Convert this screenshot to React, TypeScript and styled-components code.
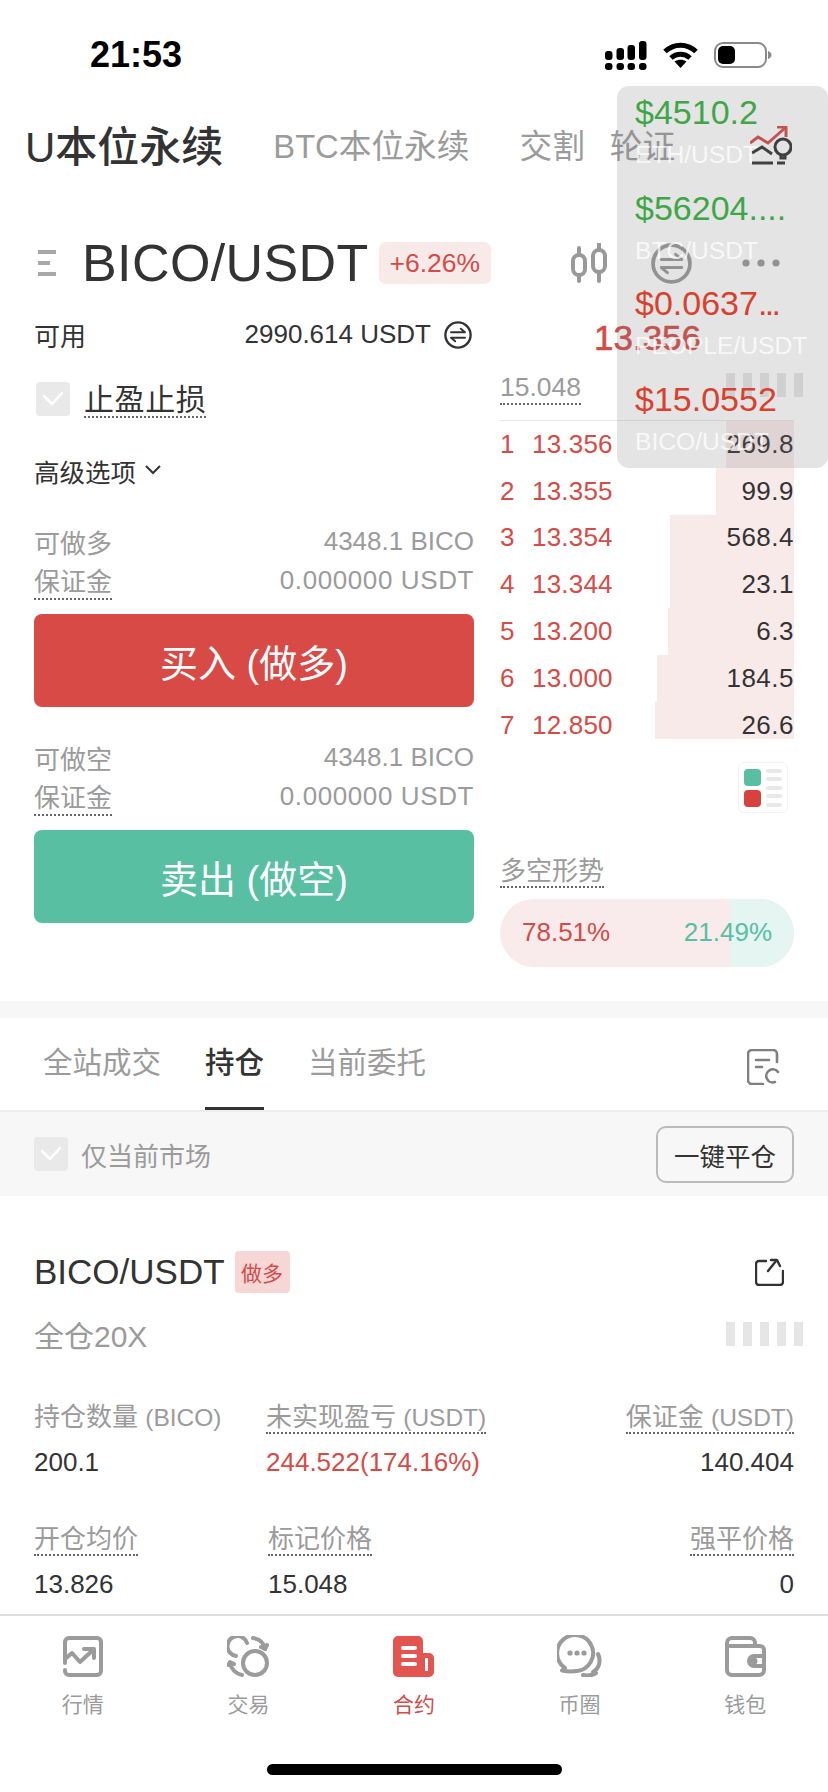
import React from "react";
import styled, { createGlobalStyle } from "styled-components";

const red = "#d44c48";
const green = "#58bfa3";
const dark = "#333333";
const gray = "#9b9b9b";

const Global = createGlobalStyle`
  html, body { margin: 0; padding: 0; background: #fff; }
  body { font-family: "Liberation Sans", "Noto Sans CJK SC", sans-serif; color: ${dark}; }
  * { box-sizing: border-box; }
`;

const Page = styled.div`
  position: relative;
  width: 828px;
  height: 1792px;
  overflow: hidden;
  display: flex;
  flex-direction: column;
  background: #fff;
`;

const StatusBar = styled.div`
  height: 86px;
  padding: 24px 56px 0 90px;
  display: flex;
  align-items: center;
  justify-content: space-between;
  flex-shrink: 0;
`;

const Clock = styled.span`
  font-size: 36px;
  font-weight: 700;
  color: #000;
`;

const StatusIcons = styled.div`
  display: flex;
  align-items: center;
  gap: 16px;
`;

const TopTabs = styled.div`
  height: 114px;
  padding: 0 36px 0 25px;
  display: flex;
  align-items: center;
  flex-shrink: 0;
`;

const TopTab = styled.span<{ $active?: boolean; $gap?: number }>`
  font-size: ${(p) => (p.$active ? 42 : 32.7)}px;
  font-weight: ${(p) => (p.$active ? 500 : 400)};
  color: ${(p) => (p.$active ? dark : gray)};
  margin-right: ${(p) => p.$gap ?? 0}px;
  white-space: nowrap;
`;

const TopIcon = styled.svg`
  margin: 6px 0 0 auto;
`;

const PairRow = styled.div`
  height: 106px;
  margin-top: 10px;
  padding: 0 48px 0 38px;
  display: flex;
  align-items: center;
  flex-shrink: 0;
`;

const PairName = styled.span`
  font-size: 52px;
  margin-left: 26px;
  letter-spacing: 0.4px;
`;

const ChangeBadge = styled.span`
  margin-left: 10px;
  width: 112px;
  height: 42px;
  border-radius: 7px;
  background: #f9eaea;
  color: ${red};
  font-size: 26.5px;
  display: flex;
  align-items: center;
  justify-content: center;
`;

const PairTools = styled.div`
  margin-left: auto;
  display: flex;
  align-items: center;
  gap: 44px;
`;

const MoreIcon = styled.svg`
  margin-left: 6px;
`;

const TradeGrid = styled.div`
  height: 685px;
  padding: 0 34px;
  display: grid;
  grid-template-columns: 440px 294px;
  column-gap: 26px;
  flex-shrink: 0;
`;

const Column = styled.div`
  display: flex;
  flex-direction: column;
`;

const AvailRow = styled.div`
  height: 37px;
  display: flex;
  align-items: center;
  justify-content: space-between;
  font-size: 26px;
`;

const AvailValue = styled.span`
  display: flex;
  align-items: center;
  gap: 13px;
  margin-right: 2px;
`;

const CheckRow = styled.div`
  margin-top: 29px;
  padding-left: 2px;
  height: 34px;
  display: flex;
  align-items: center;
  gap: 14px;
`;

const CheckBox = styled.span`
  width: 34px;
  height: 34px;
  border-radius: 4px;
  background: #e9e9e9;
  display: flex;
  align-items: center;
  justify-content: center;
  flex-shrink: 0;
`;

const Dotted = styled.span`
  display: inline-block;
  border-bottom: 2px dotted #666;
`;

const StopLoss = styled(Dotted)`
  font-size: 30px;
  letter-spacing: 0.6px;
  line-height: 36px;
  height: 36px;
  margin-top: 2px;
`;

const AdvancedRow = styled.div`
  margin-top: 34px;
  height: 40px;
  display: flex;
  align-items: center;
  gap: 8px;
  font-size: 25.5px;
`;

const InfoRow = styled.div<{ $top?: number }>`
  height: 39px;
  margin-top: ${(p) => p.$top ?? 0}px;
  display: flex;
  align-items: center;
  justify-content: space-between;
  font-size: 26px;
  color: ${gray};
`;

const ZeroMargin = styled.span`
  letter-spacing: 0.6px;
`;

const TradeButton = styled.div<{ $side: "buy" | "sell" }>`
  height: 93px;
  margin-top: 14px;
  border-radius: 8px;
  background: ${(p) => (p.$side === "buy" ? "#d74a45" : green)};
  color: #fff;
  font-size: 38px;
  display: flex;
  align-items: center;
  justify-content: center;
`;

const LastPrice = styled.div`
  height: 44px;
  padding-left: 94px;
  font-size: 35px;
  line-height: 44px;
  color: ${red};
  -webkit-text-stroke: 0.6px ${red};
`;

const MarkRow = styled.div`
  height: 61px;
  padding-bottom: 15px;
  display: flex;
  align-items: flex-end;
  justify-content: space-between;
  border-bottom: 1px solid #e8e8e8;
  font-size: 26.5px;
  color: ${gray};
`;

const Skeleton = styled.div`
  display: flex;
  gap: 8px;
  margin-right: -9px;
`;

const SkeletonBar = styled.span`
  width: 9px;
  height: 24px;
  background: #e6e6e6;
`;

const MarkSkeleton = styled(Skeleton)`
  align-self: flex-end;
  margin-bottom: 8px;
`;

const OrderBook = styled.div`
  display: flex;
  flex-direction: column;
`;

const BookRow = styled.div`
  position: relative;
  height: 46.8px;
  display: flex;
  align-items: center;
  font-size: 26px;

  &:last-child > i {
    bottom: 10px;
  }
`;

const Depth = styled.i`
  position: absolute;
  top: 0;
  right: 0;
  bottom: 0;
  background: #f9eaea;
`;

const BookIndex = styled.span`
  position: relative;
  width: 32px;
  color: ${red};
`;

const BookPrice = styled.span`
  position: relative;
  color: ${red};
  letter-spacing: 0.2px;
`;

const BookAmount = styled.span`
  position: relative;
  margin-left: auto;
  letter-spacing: 0.5px;
`;

const LayoutSwitch = styled.div`
  margin: 13px 6px 0 auto;
  width: 50px;
  height: 51px;
  border: 1px solid #f3f3f3;
  border-radius: 6px;
`;

const TrendTitle = styled(Dotted)`
  margin-top: 43px;
  align-self: flex-start;
  height: 32px;
  line-height: 30px;
  font-size: 26px;
  color: ${gray};
`;

const TrendPill = styled.div`
  margin-top: 11px;
  height: 68px;
  border-radius: 34px;
  overflow: hidden;
  background: #f9ebeb;
  position: relative;
  display: flex;
  align-items: center;
  justify-content: space-between;
  padding: 0 22px;
  font-size: 26px;
`;

const TrendShort = styled.i`
  position: absolute;
  top: 0;
  right: 0;
  bottom: 0;
  background: #e4f5f2;
`;

const TrendValue = styled.span<{ $tone: string }>`
  position: relative;
  color: ${(p) => p.$tone};
`;

const Band = styled.div`
  height: 17px;
  background: #f7f7f7;
  flex-shrink: 0;
`;

const RecordTabs = styled.div`
  height: 94px;
  padding: 0 48px 0 43px;
  display: flex;
  gap: 44px;
  border-bottom: 2px solid #eeeeee;
  flex-shrink: 0;
`;

const RecordTab = styled.div<{ $active?: boolean }>`
  position: relative;
  height: 92px;
  line-height: 90px;
  font-size: 29.5px;
  font-weight: ${(p) => (p.$active ? 500 : 400)};
  color: ${(p) => (p.$active ? dark : gray)};

  ${(p) =>
    p.$active &&
    `&::after {
      content: "";
      position: absolute;
      left: 0;
      right: 0;
      bottom: 0;
      height: 3px;
      background: ${dark};
    }`}
`;

const RecordIcon = styled.div`
  margin-left: auto;
  margin-top: 31px;
`;

const FilterBar = styled.div`
  height: 84px;
  padding: 0 34px;
  background: #f7f7f7;
  display: flex;
  align-items: center;
  gap: 13px;
  font-size: 26px;
  color: ${gray};
  flex-shrink: 0;
`;

const CloseAll = styled.div`
  margin-left: auto;
  width: 138px;
  height: 57px;
  border: 2px solid #bbbbbb;
  border-radius: 10px;
  color: ${dark};
  font-size: 25.5px;
  display: flex;
  align-items: center;
  justify-content: center;
`;

const PositionHead = styled.div`
  margin-top: 55px;
  height: 42px;
  padding: 0 44px 0 34px;
  display: flex;
  align-items: center;
  flex-shrink: 0;
`;

const PositionName = styled.span`
  font-size: 35px;
`;

const SideTag = styled.span`
  margin-left: 10px;
  width: 55px;
  height: 42px;
  border-radius: 4px;
  background: #f6d7d6;
  color: ${red};
  font-size: 21px;
  display: flex;
  align-items: center;
  justify-content: center;
`;

const ShareIcon = styled.div`
  margin-left: auto;
  display: flex;
`;

const MarginRow = styled.div`
  margin-top: 17px;
  height: 48px;
  padding: 0 34px;
  display: flex;
  align-items: center;
  justify-content: space-between;
  font-size: 30px;
  color: ${gray};
  flex-shrink: 0;
`;

const Stats = styled.div`
  margin-top: 44px;
  padding: 0 34px;
  display: grid;
  grid-template-columns: 232px 1fr auto;
  row-gap: 40px;
  flex-shrink: 0;
`;

const Stat = styled.div<{ $right?: boolean; $inset?: boolean }>`
  height: 82px;
  padding-left: ${(p) => (p.$inset ? 2 : 0)}px;
  display: flex;
  flex-direction: column;
  align-items: ${(p) => (p.$right ? "flex-end" : "flex-start")};
`;

const StatLabel = styled.span<{ $dotted?: boolean }>`
  height: 32px;
  line-height: 31px;
  font-size: 26px;
  color: ${gray};
  white-space: nowrap;
  border-bottom: 2px ${(p) => (p.$dotted ? "dotted #666" : "solid transparent")};
`;

const StatUnit = styled.span`
  font-size: 24.5px;
`;

const StatValue = styled.span<{ $tone?: string }>`
  margin-top: 6px;
  height: 44px;
  line-height: 44px;
  font-size: 26px;
  color: ${(p) => p.$tone ?? dark};
  white-space: nowrap;
`;

const Nav = styled.nav`
  position: absolute;
  left: 0;
  right: 0;
  top: 1614px;
  height: 130px;
  padding-top: 19px;
  border-top: 2px solid #dddddd;
  display: grid;
  grid-template-columns: repeat(5, 1fr);
`;

const NavItem = styled.div<{ $active?: boolean }>`
  display: flex;
  flex-direction: column;
  align-items: center;
  color: ${(p) => (p.$active ? red : gray)};
  font-size: 21px;
`;

const NavIcon = styled.div`
  height: 42px;
  display: flex;
  align-items: center;
`;

const NavLabel = styled.span`
  margin-top: 13.5px;
  line-height: 28px;
`;

const HomeBar = styled.div`
  position: absolute;
  left: 267px;
  top: 1764px;
  width: 295px;
  height: 11px;
  border-radius: 6px;
  background: #000;
`;

const Ticker = styled.aside`
  position: absolute;
  top: 86px;
  left: 617px;
  width: 211px;
  height: 382px;
  padding: 4px 0 0 18px;
  border-radius: 12px;
  background: rgba(120, 120, 120, 0.2);
`;

const TickerItem = styled.div`
  height: 95.5px;
`;

const TickerPrice = styled.div<{ $tone: string }>`
  height: 44px;
  line-height: 44px;
  font-size: 34px;
  white-space: nowrap;
  color: ${(p) => p.$tone};
`;

const TickerDots = styled.span`
  letter-spacing: -2.6px;
`;

const TickerPair = styled.div`
  height: 41px;
  line-height: 41px;
  font-size: 24.6px;
  white-space: nowrap;
  color: rgba(255, 255, 255, 0.75);
`;

const SwapIcon = ({ size, color, width }: { size: number; color: string; width: number }) => (
  <svg width={size} height={size} viewBox="0 0 40 40" fill="none" stroke={color} strokeWidth={width}>
    <circle cx="20" cy="20" r="18" />
    <path d="M10 16h20l-6-5" strokeWidth={width * 0.8} strokeLinecap="round" strokeLinejoin="round" />
    <path d="M30 24H10l6 5" strokeWidth={width * 0.8} strokeLinecap="round" strokeLinejoin="round" />
  </svg>
);

const Check = ({ size }: { size: number }) => (
  <svg width={size} height={size} viewBox="0 0 20 20" fill="none" stroke="#fff" strokeWidth="2.6" strokeLinecap="round" strokeLinejoin="round">
    <path d="M1 7l8 8 10-11" />
  </svg>
);

const NavMarket = () => (
  <svg width="40" height="41" viewBox="0 0 40 41" fill="none" stroke={gray} strokeWidth="4" strokeLinecap="round" strokeLinejoin="round">
    <path d="M2 27V6a4 4 0 0 1 4-4h28a4 4 0 0 1 4 4v29a4 4 0 0 1-4 4H6a4 4 0 0 1-4-4v-1" />
    <path d="M2 23l7-6 8 9 13-12" />
    <path d="M21 13h10v9" />
  </svg>
);

const NavTrade = () => (
  <svg width="42" height="41" viewBox="0 0 42 41" fill="none" stroke={gray} strokeWidth="4" strokeLinecap="round" strokeLinejoin="round">
    <circle cx="28" cy="27" r="12" />
    <path d="M20 7A10 10 0 1 0 9 20" />
    <path d="M26 2c6 1 11 4 12 11" />
    <path d="M40 9l-2 4-4-2" />
    <path d="M3 27c1 6 6 11 12 12" />
    <path d="M1 29l2-3 4 2" />
  </svg>
);

const NavContract = () => (
  <svg width="41" height="41" viewBox="0 0 41 41">
    <path fill="#e25550" d="M5 0h20a5 5 0 0 1 5 5v12h6a5 5 0 0 1 5 5v14a5 5 0 0 1-5 5H5a5 5 0 0 1-5-5V5a5 5 0 0 1 5-5z" />
    <g stroke="#fff" strokeWidth="4" strokeLinecap="round">
      <path d="M10 12h12" />
      <path d="M10 20h12" />
      <path d="M10 28h12" />
    </g>
    <path d="M33.5 22v13" stroke="#fff" strokeWidth="3" />
  </svg>
);

const NavCircle = () => (
  <svg width="46" height="42" viewBox="0 0 46 42" fill="none" stroke={gray} strokeWidth="4" strokeLinecap="round" strokeLinejoin="round">
    <path d="M20 36c-4 .6-10 .6-15-.500l3-2.500A18 18 0 1 1 20 36z" />
    <circle cx="13" cy="18" r="2.600" fill={gray} stroke="none" />
    <circle cx="20" cy="18" r="2.600" fill={gray} stroke="none" />
    <circle cx="27" cy="18" r="2.600" fill={gray} stroke="none" />
    <path d="M41 19c3 6 2 14-5 18" />
    <path d="M26 40c5 1 10 0 13-2" />
  </svg>
);

const NavWallet = () => (
  <svg width="41" height="41" viewBox="0 0 41 41" fill="none" stroke={gray} strokeWidth="4" strokeLinecap="round" strokeLinejoin="round">
    <path d="M2 10V7a5 5 0 0 1 5-5h18a5 5 0 0 1 5 5v3" />
    <path d="M2 8v26a5 5 0 0 0 5 5h27a5 5 0 0 0 5-5V14a4 4 0 0 0-4-4H5" />
    <path d="M39 20H29a5 5 0 0 0 0 10h10" />
    <circle cx="29" cy="25" r="1.500" fill={gray} />
  </svg>
);

const asks = [
  ["1", "13.356", "269.8", 68],
  ["2", "13.355", "99.9", 78],
  ["3", "13.354", "568.4", 124],
  ["4", "13.344", "23.1", 124],
  ["5", "13.200", "6.3", 126],
  ["6", "13.000", "184.5", 137],
  ["7", "12.850", "26.6", 139],
] as const;

const tickers = [
  { price: "$4510.2", pair: "ETH/USDT", tone: "#3fa648" },
  { price: "$56204....", pair: "BTC/USDT", tone: "#3fa648" },
  { price: "$0.0637", dots: "...", pair: "PEOPLE/USDT", tone: "#d9402e" },
  { price: "$15.0552", pair: "BICO/USDT", tone: "#d9402e" },
];

const App = () => (
  <Page>
    <Global />
    <StatusBar>
      <Clock>21:53</Clock>
      <StatusIcons>
        <svg width="42" height="29" viewBox="0 0 42 29" fill="#000">
          <rect x="0" y="10" width="7.500" height="9" rx="3" />
          <rect x="11.500" y="7" width="7.500" height="12" rx="3" />
          <rect x="22.500" y="4" width="7.500" height="15" rx="3" />
          <rect x="34" y="0" width="7.500" height="19" rx="3" />
          <rect x="0" y="22" width="7.500" height="7" rx="3" />
          <rect x="11.500" y="22" width="7.500" height="7" rx="3" />
          <rect x="22.500" y="22" width="7.500" height="7" rx="3" />
          <rect x="34" y="22" width="7.500" height="7" rx="3" />
        </svg>
        <svg width="35" height="26" viewBox="0 0 35 26" fill="none" stroke="#000" strokeWidth="5">
          <path d="M2 9.500C11 1 24 1 33 9.500" />
          <path d="M8 16c5.500-5 13.500-5 19 0" />
          <path d="M17.500 26l-6-6.500c3.500-2.500 8.500-2.500 12 0z" fill="#000" stroke="none" />
        </svg>
        <svg width="58" height="26" viewBox="0 0 58 26">
          <rect x="1" y="1" width="51" height="24" rx="8" fill="none" stroke="#8a8a8a" strokeWidth="2" />
          <rect x="4" y="4" width="17" height="18" rx="5" fill="#000" />
          <path d="M54 9c2.500 1 3.500 2.500 3.500 4s-1 3-3.500 4z" fill="#8a8a8a" />
        </svg>
      </StatusIcons>
    </StatusBar>

    <TopTabs>
      <TopTab $active $gap={50}>U本位永续</TopTab>
      <TopTab $gap={50}>BTC本位永续</TopTab>
      <TopTab $gap={25}>交割</TopTab>
      <TopTab>轮证</TopTab>
      <TopIcon width="42" height="40" viewBox="0 0 42 40" fill="none" strokeWidth="3">
        <path d="M0 17l8-6 10 6L35 2" stroke="#d44c48" />
        <path d="M27 1h9v10" stroke="#d44c48" />
        <path d="M2 27l10-6 10 7" stroke="#333" />
        <circle cx="33" cy="21" r="8" stroke="#333" />
        <path d="M31 29v3h4v-3" stroke="#333" />
        <path d="M2 37h21M27 37h8" stroke="#333" />
      </TopIcon>
    </TopTabs>

    <PairRow>
      <svg width="18" height="28" viewBox="0 0 18 28" fill="#a8a8a8">
        <rect y="1" width="18" height="4" />
        <rect y="12" width="12" height="4" />
        <rect y="23" width="18" height="4" />
      </svg>
      <PairName>BICO/USDT</PairName>
      <ChangeBadge>+6.26%</ChangeBadge>
      <PairTools>
        <svg width="36" height="40" viewBox="0 0 36 40" fill="none" stroke="#999" strokeWidth="4" strokeLinecap="round">
          <rect x="2" y="12" width="12" height="20" rx="6" />
          <rect x="22" y="7" width="12" height="22" rx="6" />
          <path d="M8 5v7M8 32v6M28 1v6M28 29v9" />
        </svg>
        <SwapIcon size={41} color="#999" width={3.6} />
        <MoreIcon width="38" height="8" viewBox="0 0 38 8" fill="#999">
          <circle cx="4" cy="4" r="3.600" />
          <circle cx="19" cy="4" r="3.600" />
          <circle cx="34" cy="4" r="3.600" />
        </MoreIcon>
      </PairTools>
    </PairRow>

    <TradeGrid>
      <Column>
        <AvailRow>
          <span>可用</span>
          <AvailValue>
            2990.614 USDT
            <SwapIcon size={28} color="#333" width={3.4} />
          </AvailValue>
        </AvailRow>
        <CheckRow>
          <CheckBox><Check size={20} /></CheckBox>
          <StopLoss>止盈止损</StopLoss>
        </CheckRow>
        <AdvancedRow>
          高级选项
          <svg width="18" height="12" viewBox="0 0 18 12" fill="none" stroke="#333" strokeWidth="2">
            <path d="M2 2l7 7 7-7" />
          </svg>
        </AdvancedRow>
        <InfoRow $top={32}>
          <span>可做多</span>
          <span>4348.1 BICO</span>
        </InfoRow>
        <InfoRow>
          <Dotted>保证金</Dotted>
          <ZeroMargin>0.000000 USDT</ZeroMargin>
        </InfoRow>
        <TradeButton $side="buy">买入 (做多)</TradeButton>
        <InfoRow $top={31}>
          <span>可做空</span>
          <span>4348.1 BICO</span>
        </InfoRow>
        <InfoRow>
          <Dotted>保证金</Dotted>
          <ZeroMargin>0.000000 USDT</ZeroMargin>
        </InfoRow>
        <TradeButton $side="sell">卖出 (做空)</TradeButton>
      </Column>

      <Column>
        <LastPrice>13.356</LastPrice>
        <MarkRow>
          <Dotted>15.048</Dotted>
          <MarkSkeleton>
            {[0, 1, 2, 3, 4].map((i) => (
              <SkeletonBar key={i} />
            ))}
          </MarkSkeleton>
        </MarkRow>
        <OrderBook>
          {asks.map(([index, price, amount, depth]) => (
            <BookRow key={index}>
              <Depth style={{ width: depth }} />
              <BookIndex>{index}</BookIndex>
              <BookPrice>{price}</BookPrice>
              <BookAmount>{amount}</BookAmount>
            </BookRow>
          ))}
        </OrderBook>
        <LayoutSwitch>
          <svg width="48" height="49" viewBox="0 0 48 49">
            <rect x="5" y="6" width="17" height="17" rx="4" fill="#58bfa3" />
            <rect x="5" y="27" width="17" height="17" rx="4" fill="#d8423c" />
            <g fill="#e8e8e8">
              <rect x="27" y="6" width="16" height="4" rx="2" />
              <rect x="27" y="14" width="16" height="4" rx="2" />
              <rect x="27" y="23" width="16" height="4" rx="2" />
              <rect x="27" y="31" width="16" height="4" rx="2" />
              <rect x="27" y="40" width="16" height="4" rx="2" />
            </g>
          </svg>
        </LayoutSwitch>
        <TrendTitle>多空形势</TrendTitle>
        <TrendPill>
          <TrendShort style={{ width: `${21.49 + 0.3}%` }} />
          <TrendValue $tone={red}>78.51%</TrendValue>
          <TrendValue $tone={green}>21.49%</TrendValue>
        </TrendPill>
      </Column>
    </TradeGrid>

    <Band />

    <RecordTabs>
      <RecordTab>全站成交</RecordTab>
      <RecordTab $active>持仓</RecordTab>
      <RecordTab>当前委托</RecordTab>
      <RecordIcon>
        <svg width="33" height="36" viewBox="0 0 33 36" fill="none" stroke="#808080" strokeWidth="2.600" strokeLinecap="round">
          <path d="M30 13V5a4 4 0 0 0-4-4H5a4 4 0 0 0-4 4v26a4 4 0 0 0 4 4h11" />
          <path d="M9 11h13M9 18h6" />
          <path d="M31 23a6.500 6.500 0 1 0-3 10" />
        </svg>
      </RecordIcon>
    </RecordTabs>

    <FilterBar>
      <CheckBox><Check size={20} /></CheckBox>
      仅当前市场
      <CloseAll>一键平仓</CloseAll>
    </FilterBar>

    <PositionHead>
      <PositionName>BICO/USDT</PositionName>
      <SideTag>做多</SideTag>
      <ShareIcon>
        <svg width="29" height="28" viewBox="0 0 29 28" fill="none" stroke="#333" strokeWidth="2.400" strokeLinecap="round" strokeLinejoin="round">
          <path d="M11 3H4a3 3 0 0 0-3 3v18a3 3 0 0 0 3 3h21a3 3 0 0 0 3-3V13" />
          <path d="M13 13l8-10" />
          <path d="M16 2h6l3 6" />
        </svg>
      </ShareIcon>
    </PositionHead>

    <MarginRow>
      全仓20X
      <Skeleton>
        {[0, 1, 2, 3, 4].map((i) => (
          <SkeletonBar key={i} />
        ))}
      </Skeleton>
    </MarginRow>

    <Stats>
      <Stat>
        <StatLabel>持仓数量 <StatUnit>(BICO)</StatUnit></StatLabel>
        <StatValue>200.1</StatValue>
      </Stat>
      <Stat>
        <StatLabel $dotted>未实现盈亏 <StatUnit>(USDT)</StatUnit></StatLabel>
        <StatValue $tone={red}>244.522(174.16%)</StatValue>
      </Stat>
      <Stat $right>
        <StatLabel $dotted>保证金 <StatUnit>(USDT)</StatUnit></StatLabel>
        <StatValue>140.404</StatValue>
      </Stat>
      <Stat>
        <StatLabel $dotted>开仓均价</StatLabel>
        <StatValue>13.826</StatValue>
      </Stat>
      <Stat $inset>
        <StatLabel $dotted>标记价格</StatLabel>
        <StatValue>15.048</StatValue>
      </Stat>
      <Stat $right>
        <StatLabel $dotted>强平价格</StatLabel>
        <StatValue>0</StatValue>
      </Stat>
    </Stats>

    <Nav>
      <NavItem>
        <NavIcon><NavMarket /></NavIcon>
        <NavLabel>行情</NavLabel>
      </NavItem>
      <NavItem>
        <NavIcon><NavTrade /></NavIcon>
        <NavLabel>交易</NavLabel>
      </NavItem>
      <NavItem $active>
        <NavIcon><NavContract /></NavIcon>
        <NavLabel>合约</NavLabel>
      </NavItem>
      <NavItem>
        <NavIcon><NavCircle /></NavIcon>
        <NavLabel>币圈</NavLabel>
      </NavItem>
      <NavItem>
        <NavIcon><NavWallet /></NavIcon>
        <NavLabel>钱包</NavLabel>
      </NavItem>
    </Nav>
    <HomeBar />

    <Ticker>
      {tickers.map(({ price, dots, pair, tone }) => (
        <TickerItem key={pair}>
          <TickerPrice $tone={tone}>
            {price}
            {dots && <TickerDots>{dots}</TickerDots>}
          </TickerPrice>
          <TickerPair>{pair}</TickerPair>
        </TickerItem>
      ))}
    </Ticker>
  </Page>
);

export default App;
